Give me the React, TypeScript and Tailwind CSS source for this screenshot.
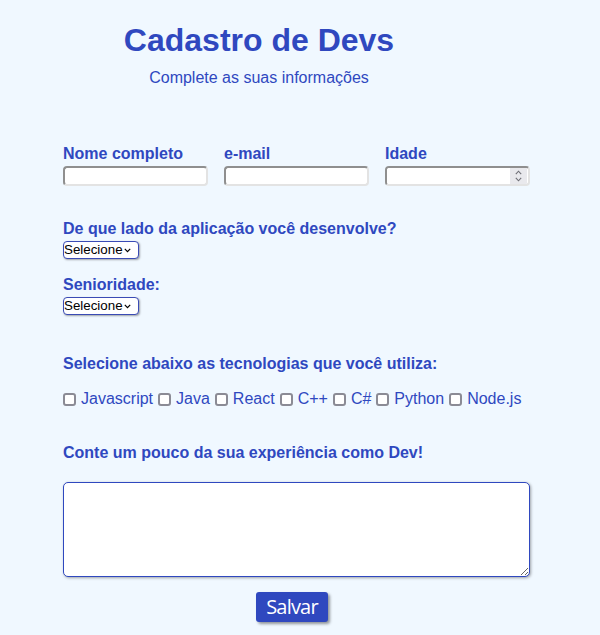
import React from "react";

const inputCls =
  "mt-[3px] block w-full h-[20px] bg-white border-2 border-t-[#8f8f8f] border-l-[#8f8f8f] border-r-[#e3e3e3] border-b-[#e3e3e3] rounded-[4px] outline-none px-[2px] text-[13px] text-black";

function Chevron() {
  return (
    <svg width="7" height="5" viewBox="0 0 7 5" className="mr-[7px] shrink-0" aria-hidden>
      <polyline points="0.8,0.8 3.5,3.6 6.2,0.8" fill="none" stroke="#000" strokeWidth="1.2" />
    </svg>
  );
}

function FakeSelect() {
  return (
    <div className="mt-[3px] flex items-center w-[76px] h-[18px] border border-[#3a4bb5] rounded-[4px] bg-white shadow-[1px_1px_2px_rgba(0,0,0,0.35)]">
      <select className="flex-1 min-w-0 appearance-none bg-transparent text-black text-[13.33px] leading-[16px] p-0 outline-none font-['Liberation_Sans',Arial,sans-serif]">
        <option>Selecione</option>
      </select>
      <Chevron />
    </div>
  );
}

const techs = ["Javascript", "Java", "React", "C++", "C#", "Python", "Node.js"];

export default function App() {
  return (
    <div className="min-h-[635px] bg-[#f0f8ff] font-['Liberation_Sans',Arial,sans-serif] text-[#2f48bf] pt-[22px]">
      <header className="w-[518px] text-center">
        <h1 className="text-[32px] leading-[37px] font-bold">Cadastro de Devs</h1>
        <p className="mt-[10px] text-[16px] leading-[18px]">Complete as suas informações</p>
      </header>

      <form className="ml-[63px] w-[467px] mt-[58px]" onSubmit={(e) => e.preventDefault()}>
        <div className="flex gap-[16px]">
          <div className="w-[145px]">
            <label className="block font-bold text-[16px] leading-[18px]">Nome completo</label>
            <input type="text" className={inputCls} />
          </div>
          <div className="w-[145px]">
            <label className="block font-bold text-[16px] leading-[18px]">e-mail</label>
            <input type="email" className={inputCls} />
          </div>
          <div className="w-[145px]">
            <label className="block font-bold text-[16px] leading-[18px]">Idade</label>
            <div className="mt-[3px] flex w-full h-[20px] bg-white border-2 border-t-[#8f8f8f] border-l-[#8f8f8f] border-r-[#e3e3e3] border-b-[#e3e3e3] rounded-[4px] overflow-hidden">
              <input type="text" inputMode="numeric" className="flex-1 min-w-0 h-full bg-white outline-none px-[2px] text-[13px] text-black" />
              <div className="w-[17px] h-full bg-[#e9e9ed] flex flex-col items-center justify-center gap-[2px] mr-[1px]">
                <svg width="7" height="5" viewBox="0 0 7 5" aria-hidden>
                  <polyline points="0.8,4.2 3.5,1.2 6.2,4.2" fill="none" stroke="#6f6f76" strokeWidth="1.1" />
                </svg>
                <svg width="7" height="5" viewBox="0 0 7 5" aria-hidden>
                  <polyline points="0.8,0.8 3.5,3.8 6.2,0.8" fill="none" stroke="#6f6f76" strokeWidth="1.1" />
                </svg>
              </div>
            </div>
          </div>
        </div>

        <label className="mt-[34px] block font-bold text-[16px] leading-[18px]">
          De que lado da aplicação você desenvolve?
        </label>
        <FakeSelect />

        <label className="mt-[17px] block font-bold text-[16px] leading-[18px]">Senioridade:</label>
        <FakeSelect />

        <p className="mt-[40px] font-bold text-[16px] leading-[18px]">
          Selecione abaixo as tecnologias que você utiliza:
        </p>
        <div className="mt-[17px] flex items-center gap-[5px] text-[16px] leading-[18px]">
          {techs.map((t) => (
            <label key={t} className="flex items-center gap-[5px]">
              <input
                type="checkbox"
                className="appearance-none m-0 w-[13px] h-[13px] border-2 border-[#8b8b95] rounded-[3px] bg-white"
              />
              {t}
            </label>
          ))}
        </div>

        <label className="mt-[36px] block font-bold text-[16px] leading-[18px]">
          Conte um pouco da sua experiência como Dev!
        </label>
        <textarea className="mt-[20px] block w-full h-[95px] bg-white border border-[#2f48bf] rounded-[5px] shadow-[1px_1px_3px_rgba(0,0,0,0.35)] outline-none resize" />

        <button
          type="submit"
          className="mt-[15px] ml-[193px] block w-[72px] h-[30px] bg-[#2f48bf] text-white rounded-[3px] shadow-[2px_2px_3px_rgba(0,0,0,0.4)] font-['Open_Sans',sans-serif] text-[20px] leading-[30px] tracking-[-0.8px] text-center"
        >
          Salvar
        </button>
      </form>
    </div>
  );
}
